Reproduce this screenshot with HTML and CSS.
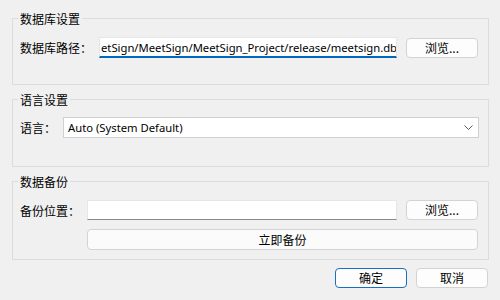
FILE: index.html
```html
<!DOCTYPE html>
<html lang="zh-CN">
<head>
<meta charset="utf-8">
<title>设置</title>
<link rel="stylesheet" href="styles.css">
</head>
<body>
<div class="dialog">
  <fieldset class="group group-db">
    <legend>数据库设置</legend>
    <div class="row">
      <span class="label">数据库路径：</span>
      <div class="edit focused"><span class="edit-text">etSign/MeetSign/MeetSign_Project/release/meetsign.db</span><span class="caret"></span></div>
      <button class="btn browse">浏览...</button>
    </div>
  </fieldset>

  <fieldset class="group group-lang">
    <legend>语言设置</legend>
    <div class="row">
      <span class="label">语言：</span>
      <div class="combo">
        <span class="combo-text">Auto (System Default)</span>
        <svg class="chevron" width="9" height="5" viewBox="0 0 9 5"><polyline points="0.5,0.5 4.5,4.5 8.5,0.5" fill="none" stroke="#5a5a5a" stroke-width="1"/></svg>
      </div>
    </div>
  </fieldset>

  <fieldset class="group group-backup">
    <legend>数据备份</legend>
    <div class="backup-grid">
      <span class="label">备份位置：</span>
      <div class="edit plain"></div>
      <button class="btn browse">浏览...</button>
      <button class="btn backup-now">立即备份</button>
    </div>
  </fieldset>

  <div class="actions">
    <button class="btn action default">确定</button>
    <button class="btn action">取消</button>
  </div>
</div>
</body>
</html>
```

FILE: styles.css
```css
html, body {
  margin: 0;
  padding: 0;
  background: #f0f0f0;
}

body {
  width: 500px;
  height: 300px;
  overflow: hidden;
  font-family: "Noto Sans", "Noto Sans CJK SC", sans-serif;
  font-size: 12px;
  color: #000;
}

.dialog {
  padding: 10px 11px 0 12px;
  display: flex;
  flex-direction: column;
  gap: 6px;
}

.group {
  margin: 0;
  border: 1px solid #dcdcdc;
  padding: 10px 10px 0 7px;
  min-width: 0;
}

.group legend {
  margin-left: -2px;
  padding: 0 2px;
  line-height: 17px;
  font-family: "Noto Sans CJK SC", sans-serif;
}

.group-db { padding-bottom: 26px; }
.group-lang { padding-top: 9px; padding-bottom: 28px; }
.group-backup { padding-bottom: 9px; }

.row {
  display: flex;
  align-items: center;
  height: 21px;
}

.label {
  font-family: "Noto Sans CJK SC", sans-serif;
  white-space: nowrap;
  margin-right: 7px;
}

.edit {
  flex: 1;
  min-width: 0;
  height: 21px;
  box-sizing: border-box;
  background: #fff;
  border: 1px solid #e6e6e6;
  border-bottom: 1px solid #8a8a8a;
  display: flex;
  align-items: center;
  overflow: hidden;
  white-space: nowrap;
  padding-left: 1px;
}

.edit.focused {
  border-bottom: 2px solid #0067c0;
  padding-top: 1px;
}

.edit-text,
.combo-text {
  font-family: "Noto Sans", sans-serif;
  font-size: 11.25px;
}

.caret {
  display: inline-block;
  flex: none;
  width: 1px;
  height: 14px;
  background: #000;
  margin-left: 1px;
}

.btn {
  font: inherit;
  font-family: "Noto Sans CJK SC", sans-serif;
  font-size: 12px;
  color: #000;
  background: #fdfdfd;
  border: 1px solid #d3d3d3;
  border-radius: 4px;
  height: 20px;
  padding: 0;
  line-height: 18px;
  box-sizing: border-box;
}

.browse {
  width: 72px;
  margin-left: 9px;
}

.combo {
  flex: 1;
  height: 21px;
  box-sizing: border-box;
  background: #fff;
  border: 1px solid #d0d0d0;
  display: flex;
  align-items: center;
  justify-content: space-between;
  padding: 0 5px 0 4px;
  margin-right: -1px;
}

.chevron {
  display: block;
}

.backup-grid {
  display: grid;
  grid-template-columns: auto 1fr auto;
  row-gap: 9px;
  align-items: center;
}

.backup-grid .edit {
  height: 20px;
}

.backup-now {
  grid-column: 2 / 4;
  height: 21px;
  background: #fbfbfb;
}

.actions {
  display: flex;
  justify-content: flex-end;
  gap: 9px;
  margin-top: 2px;
  padding-right: 1px;
}

.action {
  width: 72px;
}

.action.default {
  border-color: #1a6fbf;
}
```
